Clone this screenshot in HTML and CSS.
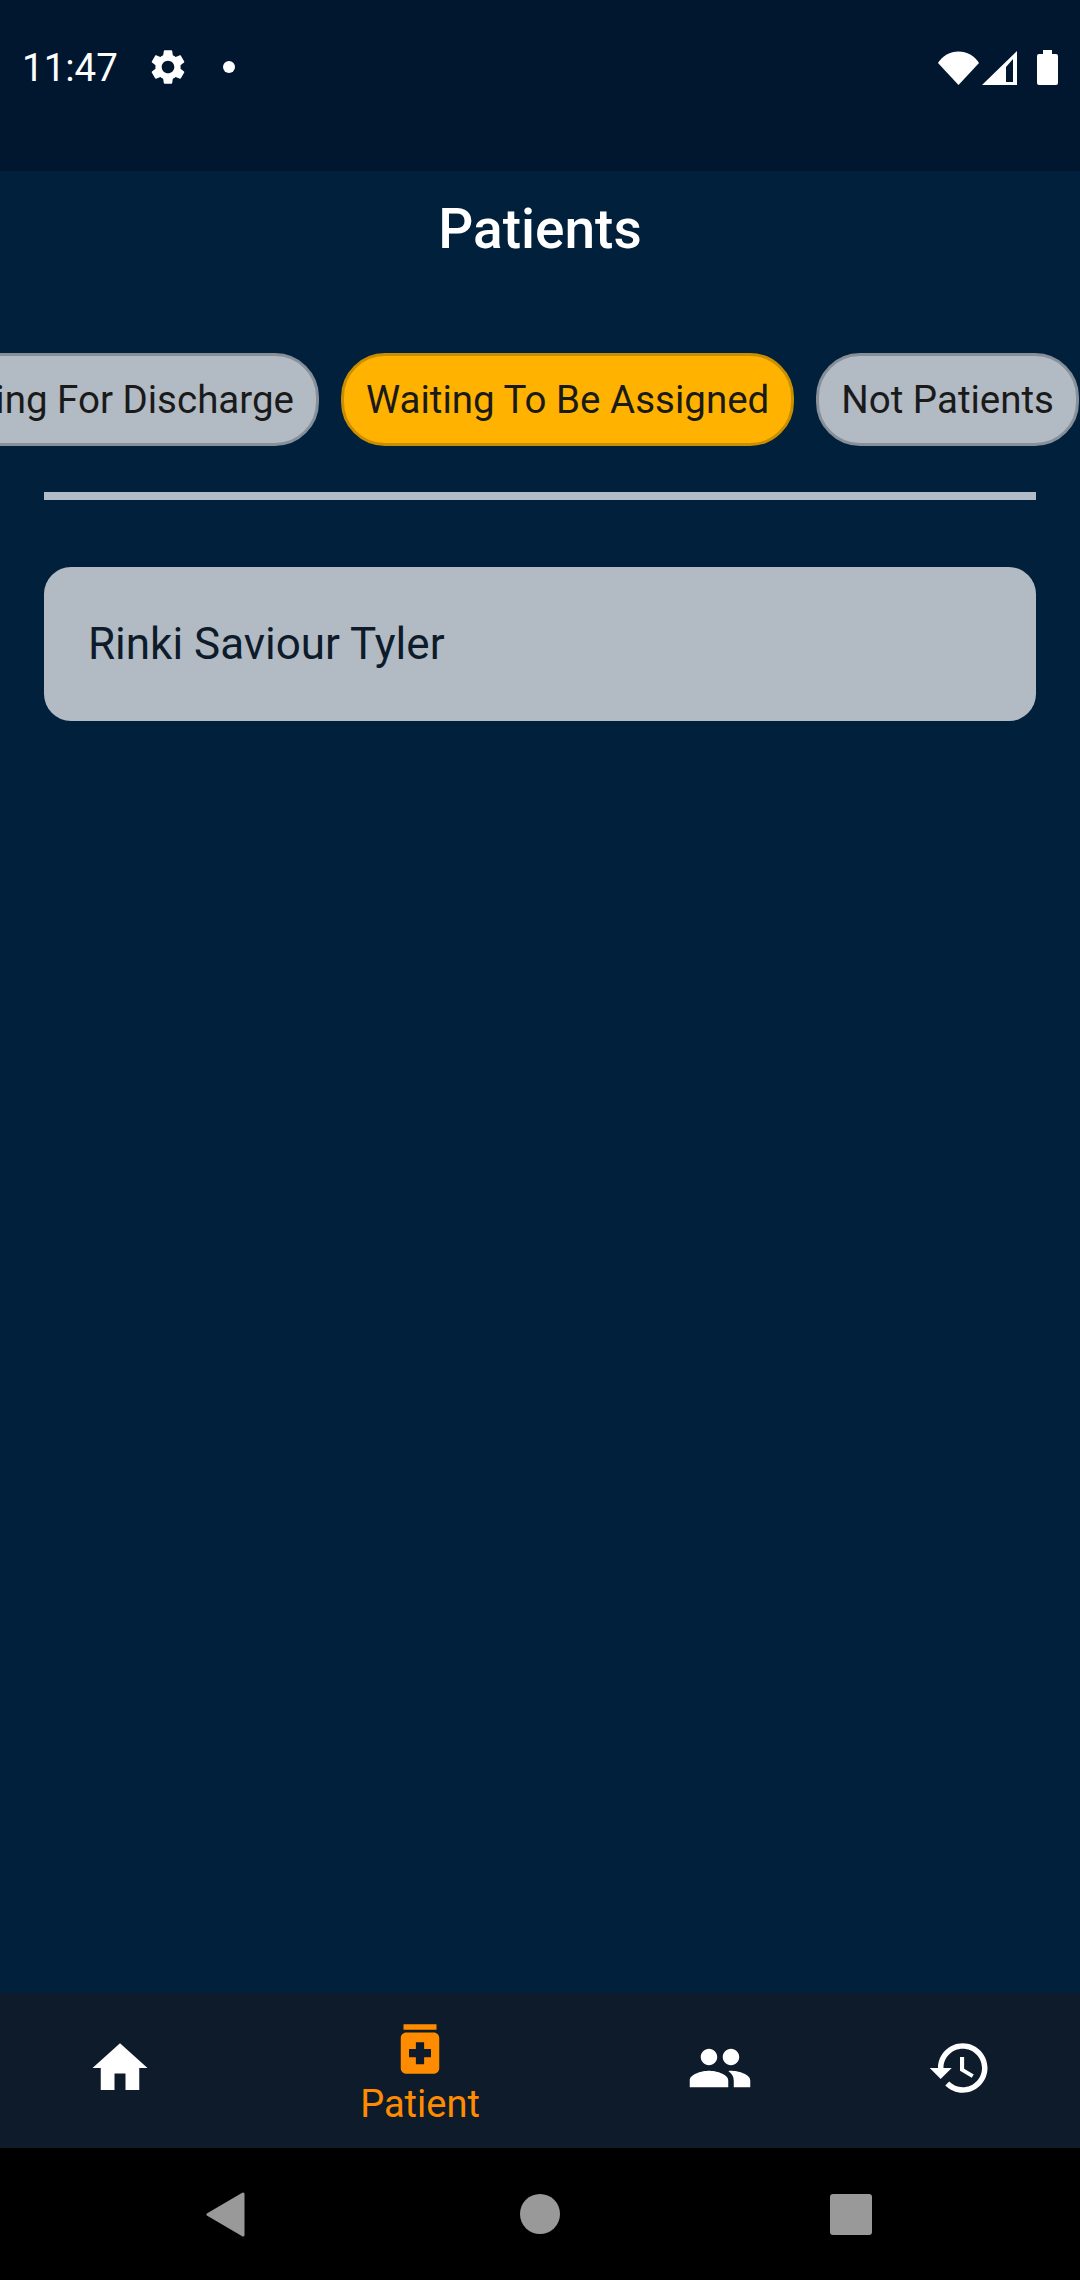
FILE: index.html
```html
<!DOCTYPE html>
<html lang="en">
<head>
    <meta charset="UTF-8">
    <meta name="viewport" content="width=device-width, initial-scale=1.0">
    <title>Patients</title>
    <link rel="stylesheet" href="styles.css">
</head>
<body>
    <div class="page">
        <div class="status-bar">
            <span class="clock">11:47</span>
            <svg class="gear" viewBox="0 0 24 24"><path d="M19.14 12.94c.04-.3.06-.61.06-.94 0-.32-.02-.64-.07-.94l2.03-1.58c.18-.14.23-.41.12-.61l-1.92-3.32c-.12-.22-.37-.29-.59-.22l-2.39.96c-.5-.38-1.03-.7-1.62-.94l-.36-2.54c-.04-.24-.24-.41-.48-.41h-3.84c-.24 0-.43.17-.47.41l-.36 2.54c-.59.24-1.13.57-1.62.94l-2.39-.96c-.22-.08-.47 0-.59.22L2.74 8.87c-.12.21-.08.47.12.61l2.03 1.58c-.05.3-.09.63-.09.94s.02.64.07.94l-2.03 1.58c-.18.14-.23.41-.12.61l1.92 3.32c.12.22.37.29.59.22l2.39-.96c.5.38 1.03.7 1.62.94l.36 2.54c.05.24.24.41.48.41h3.84c.24 0 .44-.17.47-.41l.36-2.54c.59-.24 1.13-.56 1.62-.94l2.39.96c.22.08.47 0 .59-.22l1.92-3.32c.12-.22.07-.47-.12-.61l-2.01-1.58zM12 15.6c-1.98 0-3.6-1.62-3.6-3.6s1.62-3.6 3.6-3.6 3.6 1.62 3.6 3.6-1.62 3.6-3.6 3.6z"/></svg>
            <span class="dot"></span>
            <div class="status-right">
                <svg class="wifi" viewBox="0 0 41 34"><path d="M0 12A24 24 0 0 1 41 12L20.5 34Z"/></svg>
                <svg class="signal" viewBox="0 0 35 34"><path fill-rule="evenodd" d="M0 34L35 0V34ZM24 16V31H31V8Z"/></svg>
                <svg class="battery" viewBox="0 0 21 35"><path d="M6 0H15V4H19A2 2 0 0 1 21 6V33A2 2 0 0 1 19 35H2A2 2 0 0 1 0 33V6A2 2 0 0 1 2 4H6Z"/></svg>
            </div>
        </div>

        <div class="content">
            <h1 class="title">Patients</h1>
            <div class="chips">
                <div class="chip">Waiting For Discharge</div>
                <div class="chip chip-active">Waiting To Be Assigned</div>
                <div class="chip">Not Patients</div>
            </div>
            <div class="divider"></div>
            <div class="card">Rinki Saviour Tyler</div>
        </div>

        <div class="bottom-nav">
            <div class="nav-item">
                <svg class="nav-icon" viewBox="0 0 24 24"><path d="M10 20v-6h4v6h5v-8h3L12 3 2 12h3v8z"/></svg>
            </div>
            <div class="nav-item nav-active">
                <svg class="nav-icon" viewBox="0 0 24 24"><path d="M6 3h12v2H6zm11 3H7c-1.1 0-2 .9-2 2v11c0 1.1.9 2 2 2h10c1.1 0 2-.9 2-2V8c0-1.1-.9-2-2-2zm-1 9h-2.5v2.5h-3V15H8v-3h2.5V9.5h3V12H16v3z"/></svg>
                <span class="nav-label">Patient</span>
            </div>
            <div class="nav-item">
                <svg class="nav-icon" viewBox="0 0 24 24"><path d="M16 11c1.66 0 2.99-1.34 2.99-3S17.66 5 16 5c-1.66 0-3 1.34-3 3s1.34 3 3 3zm-8 0c1.66 0 2.99-1.34 2.99-3S9.66 5 8 5C6.34 5 5 6.34 5 8s1.34 3 3 3zm0 2c-2.33 0-7 1.17-7 3.5V19h14v-2.5c0-2.33-4.67-3.5-7-3.5zm8 0c-.29 0-.62.02-.97.05 1.16.84 1.97 1.97 1.97 3.45V19h6v-2.5c0-2.33-4.67-3.5-7-3.5z"/></svg>
            </div>
            <div class="nav-item">
                <svg class="nav-icon" viewBox="0 0 24 24"><path d="M13 3c-4.97 0-9 4.03-9 9H1l3.89 3.89.07.14L9 12H6c0-3.87 3.13-7 7-7s7 3.13 7 7-3.13 7-7 7c-1.93 0-3.68-.79-4.94-2.06l-1.42 1.42C8.27 19.99 10.51 21 13 21c4.97 0 9-4.03 9-9s-4.03-9-9-9zm-1 5v5l4.28 2.54.72-1.21-3.5-2.08V8H12z"/></svg>
            </div>
        </div>

        <div class="system-nav">
            <svg class="sys-back" viewBox="0 0 39 45"><path d="M37 2V43L2 22.5Z" stroke-width="3" stroke-linejoin="round"/></svg>
            <span class="sys-home"></span>
            <span class="sys-recent"></span>
        </div>
    </div>
</body>
</html>
```

FILE: styles.css
```css
* {
    box-sizing: border-box;
}
body {
    margin: 0;
    font-family: Roboto, sans-serif;
}
.page {
    display: flex;
    flex-direction: column;
    width: 1080px;
    height: 2280px;
    overflow: hidden;
    background-color: #00203c;
}

/* status bar */
.status-bar {
    display: flex;
    align-items: center;
    height: 171px;
    padding: 0 22px 37px 22px;
    color: #fff;
    background-color: #011730;
}
.clock {
    font-size: 38.5px;
    line-height: 45px;
}
.gear {
    width: 42px;
    height: 42px;
    margin-left: 29px;
    fill: #fff;
}
.dot {
    width: 12px;
    height: 12px;
    margin-left: 34px;
    border-radius: 50%;
    background-color: #fff;
}
.status-right {
    display: flex;
    align-items: flex-end;
    margin-left: auto;
}
.status-right svg {
    fill: #fff;
}
.wifi {
    width: 41px;
    height: 34px;
}
.signal {
    width: 35px;
    height: 34px;
    margin-left: 3px;
}
.battery {
    width: 21px;
    height: 35px;
    margin-left: 20px;
}

/* main */
.content {
    flex: 1;
    padding-top: 29px;
}
.title {
    margin: 0;
    font-size: 55px;
    font-weight: 500;
    line-height: 58px;
    text-align: center;
    color: #fff;
}
.chips {
    display: flex;
    justify-content: flex-end;
    gap: 22px;
    margin-top: 95px;
    padding-right: 1px;
    overflow: hidden;
}
.chip {
    flex-shrink: 0;
    height: 93px;
    padding: 0 22px;
    border: 3px solid #878f99;
    border-radius: 44px;
    font-size: 38.5px;
    line-height: 88px;
    color: #1a1a1a;
    background-color: #b2bac4;
}
.chip-active {
    border-color: #c98f00;
    background-color: #ffb300;
}
.divider {
    height: 8px;
    margin: 46px 44px 0;
    background-color: #b0bcc8;
}
.card {
    height: 154px;
    margin: 67px 44px 0;
    padding-left: 44px;
    border-radius: 27px;
    font-size: 44px;
    line-height: 154px;
    color: #0d1b2a;
    background-color: #b2bac4;
}

/* bottom navigation */
.bottom-nav {
    display: grid;
    grid-template-columns: 2fr 3fr 2fr 2fr;
    height: 155px;
    background-color: #0d1b2a;
}
.nav-item {
    display: flex;
    flex-direction: column;
    align-items: center;
    padding-top: 42px;
    fill: #fff;
}
.nav-active {
    padding-top: 23px;
    fill: #ff8c00;
}
.nav-icon {
    width: 66px;
    height: 66px;
}
.nav-label {
    font-size: 38px;
    line-height: 45px;
    color: #ff8c00;
}

/* android buttons */
.system-nav {
    display: flex;
    align-items: center;
    gap: 270px;
    height: 132px;
    padding-left: 206px;
    background-color: #000;
}
.sys-back {
    width: 39px;
    height: 45px;
    margin-right: 5px;
    fill: #999;
    stroke: #999;
}
.sys-home {
    width: 40px;
    height: 40px;
    border-radius: 50%;
    background-color: #999;
}
.sys-recent {
    width: 42px;
    height: 41px;
    border-radius: 3px;
    background-color: #999;
}
```
